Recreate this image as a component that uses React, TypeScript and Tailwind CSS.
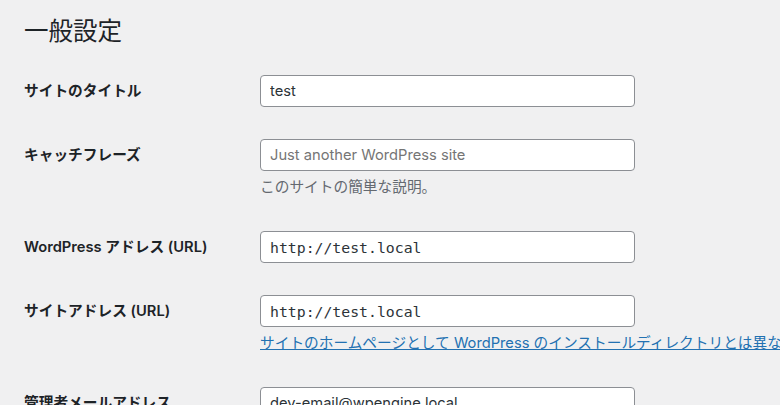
import React from 'react'

const sans = { fontFamily: 'Inter, "Noto Sans CJK JP", sans-serif' }
const mono = { fontFamily: '"DejaVu Sans Mono", monospace', fontSize: '14.8px' }

interface RowProps {
  label: string
  children: React.ReactNode
}

const Row: React.FC<RowProps> = ({ label, children }) => (
  <div className="flex py-4">
    <div className="w-[236px] shrink-0 h-8 flex items-center text-[14.7px] font-semibold text-[#1d2327]">
      {label}
    </div>
    <div className="flex-1 min-w-0">{children}</div>
  </div>
)

const inputCls =
  'block w-[375px] h-8 px-[9px] rounded-[4px] border border-[#8c8f94] bg-white text-[14.7px] text-[#2c3338] outline-none placeholder:text-[#757575]'

const App: React.FC = () => {
  return (
    <div className="w-[780px] h-[405px] overflow-hidden bg-[#f0f0f1] pl-6" style={sans}>
      {/* Page title */}
      <h1 className="pt-4 mb-[13px] text-[24.5px] leading-[30px] font-normal text-[#1d2327]">一般設定</h1>

      <Row label="サイトのタイトル">
        <input className={inputCls} defaultValue="test" />
      </Row>

      <Row label="キャッチフレーズ">
        <input className={inputCls} placeholder="Just another WordPress site" />
        <p className="mt-1 leading-6 text-[14.7px] text-[#646970]">このサイトの簡単な説明。</p>
      </Row>

      <Row label="WordPress アドレス (URL)">
        <input className={inputCls} style={mono} defaultValue="http://test.local" />
      </Row>

      <Row label="サイトアドレス (URL)">
        <input className={inputCls} style={mono} defaultValue="http://test.local" />
        <p className="mt-1 leading-6 text-[14.7px] whitespace-nowrap">
          <a href="#" className="text-[#2271b1] underline">
            サイトのホームページとして WordPress のインストールディレクトリとは異なる場所を設定する場合は、ここにアドレスを入力してください。
          </a>
        </p>
      </Row>

      <Row label="管理者メールアドレス">
        <input className={inputCls} defaultValue="dev-email@wpengine.local" />
      </Row>
    </div>
  )
}

export default App
